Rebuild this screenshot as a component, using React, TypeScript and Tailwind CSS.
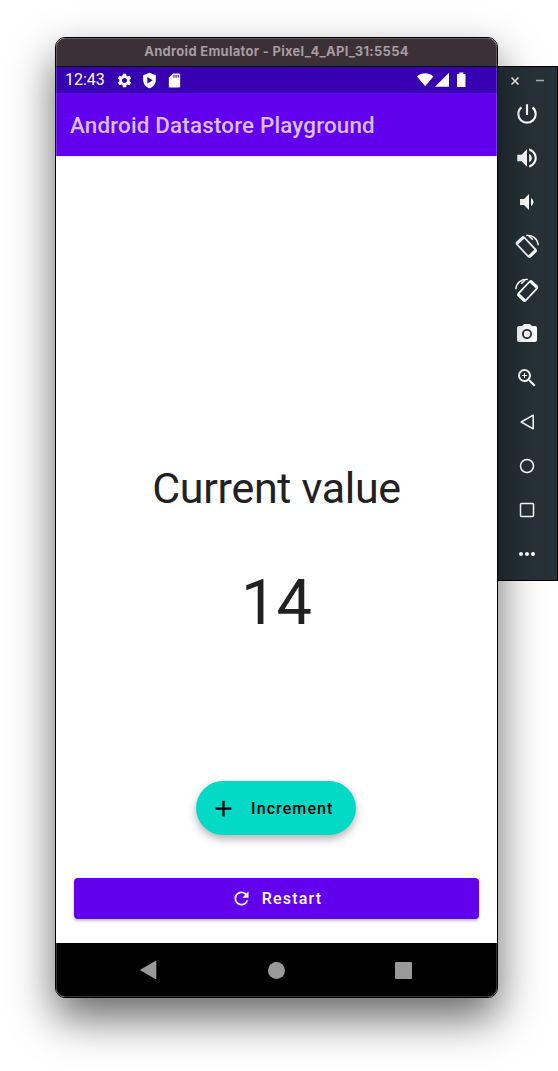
import type { ReactNode } from "react";

function Glyph({ d, className }: { d: string; className: string }) {
  return (
    <svg viewBox="0 0 24 24" className={className} fill="currentColor">
      <path d={d} />
    </svg>
  );
}

const paths = {
  settings:
    "M19.14 12.94c.04-.3.06-.61.06-.94 0-.32-.02-.64-.07-.94l2.03-1.58a.49.49 0 0 0 .12-.61l-1.92-3.32a.488.488 0 0 0-.59-.22l-2.39.96c-.5-.38-1.03-.7-1.62-.94l-.36-2.54a.484.484 0 0 0-.48-.41h-3.84c-.24 0-.43.17-.47.41l-.36 2.54c-.59.24-1.13.57-1.62.94l-2.39-.96c-.22-.08-.47 0-.59.22L2.74 8.87c-.12.21-.08.47.12.61l2.03 1.58c-.05.3-.09.63-.09.94s.02.64.07.94l-2.03 1.58a.49.49 0 0 0-.12.61l1.92 3.32c.12.22.37.29.59.22l2.39-.96c.5.38 1.03.7 1.62.94l.36 2.54c.05.24.24.41.48.41h3.84c.24 0 .44-.17.47-.41l.36-2.54c.59-.24 1.13-.56 1.62-.94l2.39.96c.22.08.47 0 .59-.22l1.92-3.32c.12-.22.07-.47-.12-.61l-2.01-1.58zM12 15.6c-1.98 0-3.6-1.62-3.6-3.6s1.62-3.6 3.6-3.6 3.6 1.62 3.6 3.6-1.62 3.6-3.6 3.6z",
  shieldPlay: "M12 1 3 4.500v6.500c0 5.55 3.84 10.74 9 12 5.16-1.26 9-6.45 9-12V4.500L12 1zM9 7.200l7.500 4.600L9 16.400V7.200z",
  sdCard: "M18 2h-8L4 8v12c0 1.1.9 2 2 2h12c1.1 0 2-.9 2-2V4c0-1.1-.9-2-2-2zm-6 6h-1.500V4H12v4zm3 0h-1.500V4H15v4zm3 0h-1.500V4H18v4z",
  power:
    "M13 3h-2v10h2V3zm4.83 2.17-1.42 1.42A6.92 6.92 0 0 1 19 12c0 3.87-3.13 7-7 7A6.995 6.995 0 0 1 7.58 6.58L6.17 5.17A8.932 8.932 0 0 0 3 12a9 9 0 0 0 18 0c0-2.74-1.23-5.18-3.17-6.83z",
  volumeUp:
    "M3 9v6h4l5 5V4L7 9H3zm13.5 3A4.5 4.5 0 0 0 14 7.97v8.05c1.48-.73 2.5-2.25 2.5-4.02zM14 3.23v2.06c2.89.86 5 3.54 5 6.71s-2.11 5.85-5 6.71v2.06c4.01-.91 7-4.49 7-8.77s-2.99-7.86-7-8.77z",
  volumeDown: "M18.5 12A4.5 4.5 0 0 0 16 7.97v8.05c1.48-.73 2.5-2.25 2.5-4.02zM5 9v6h4l5 5V4L9 9H5z",
  zoomIn:
    "M15.5 14h-.79l-.28-.27A6.471 6.471 0 0 0 16 9.5 6.5 6.5 0 1 0 9.5 16c1.61 0 3.09-.59 4.23-1.57l.27.28v.79l5 4.99L20.49 19l-4.99-5zm-6 0C7.01 14 5 11.99 5 9.5S7.01 5 9.5 5 14 7.01 14 9.5 11.99 14 9.5 14zm2.5-4h-2v2H9v-2H7V9h2V7h1v2h2v1z",
  more: "M6 10c-1.1 0-2 .9-2 2s.9 2 2 2 2-.9 2-2-.9-2-2-2zm12 0c-1.1 0-2 .9-2 2s.9 2 2 2 2-.9 2-2-.9-2-2-2zm-6 0c-1.1 0-2 .9-2 2s.9 2 2 2 2-.9 2-2-.9-2-2-2z",
  refresh:
    "M17.65 6.35A7.958 7.958 0 0 0 12 4c-4.42 0-7.99 3.58-7.99 8s3.57 8 7.99 8c3.73 0 6.84-2.55 7.73-6h-2.08A5.99 5.99 0 0 1 12 18c-3.31 0-6-2.69-6-6s2.69-6 6-6c1.66 0 3.14.69 4.22 1.78L13 11h7V4l-2.35 2.35z",
  add: "M19 13h-6v6h-2v-6H5v-2h6V5h2v6h6v2z",
};

function RotateIcon({ mirrored = false }: { mirrored?: boolean }) {
  return (
    <svg
      viewBox="0 0 24 24"
      className={mirrored ? "size-6 -scale-x-100 overflow-visible" : "size-6 overflow-visible"}
      fill="none"
      stroke="currentColor"
    >
      <g transform="rotate(-43 11.3 13)">
        <rect x="6.300" y="3.200" width="10" height="19.600" rx="1.500" strokeWidth="1.700" />
        <path d="M6.600 4.200h9.400M6.600 21.800h9.400" strokeWidth="2.600" />
      </g>
      <path d="M11.200 1.500c6.200-.8 11.400 3.200 12 9.800" strokeWidth="1.400" />
      <path d="M13.500 1.500l4.300 4.200" strokeWidth="1.600" />
    </svg>
  );
}

function SideButton({ children }: { children: ReactNode }) {
  return <button className="flex h-11 w-[58px] items-center justify-center">{children}</button>;
}

function SidePanel() {
  return (
    <aside className="mt-[29px] flex h-[515px] w-[60px] flex-col border-y border-r border-black bg-[#263238] text-white">
      <div className="flex h-[25px] items-center pt-[3px]">
        <svg viewBox="0 0 59 22" className="h-[22px] w-[59px]" fill="none" stroke="currentColor">
          <path d="m13.5 7.5 7 7m0-7-7 7" strokeWidth="1.5" />
          <path d="M38 10.500h8" strokeWidth="1.6" stroke="#a4aaad" />
        </svg>
      </div>
      <SideButton><Glyph d={paths.power} className="size-[26px]" /></SideButton>
      <SideButton><Glyph d={paths.volumeUp} className="size-[26px]" /></SideButton>
      <SideButton><Glyph d={paths.volumeDown} className="size-6" /></SideButton>
      <SideButton><RotateIcon /></SideButton>
      <SideButton><RotateIcon mirrored /></SideButton>
      <SideButton>
        <svg viewBox="0 0 24 24" className="size-6" fill="currentColor">
          <path
            fillRule="evenodd"
            d="M9 2 7.17 4H4c-1.1 0-2 .9-2 2v12c0 1.1.9 2 2 2h16c1.1 0 2-.9 2-2V6c0-1.1-.9-2-2-2h-3.17L15 2H9zm3 15c-2.76 0-5-2.24-5-5s2.24-5 5-5 5 2.24 5 5-2.24 5-5 5z"
          />
          <circle cx="12" cy="12" r="3.2" />
        </svg>
      </SideButton>
      <SideButton><Glyph d={paths.zoomIn} className="size-6" /></SideButton>
      <SideButton>
        <svg viewBox="0 0 24 24" className="size-6" fill="none" stroke="currentColor" strokeWidth="1.5" strokeLinejoin="round">
          <path d="M18.2 5.2v13.6L6.2 12z" />
        </svg>
      </SideButton>
      <SideButton>
        <svg viewBox="0 0 24 24" className="size-6" fill="none" stroke="currentColor" strokeWidth="1.5">
          <circle cx="12" cy="12" r="6.5" />
        </svg>
      </SideButton>
      <SideButton>
        <svg viewBox="0 0 24 24" className="size-6" fill="none" stroke="currentColor" strokeWidth="1.5">
          <rect x="5.5" y="5.5" width="13" height="13" rx="1" />
        </svg>
      </SideButton>
      <SideButton><Glyph d={paths.more} className="size-6" /></SideButton>
    </aside>
  );
}

function StatusBar() {
  return (
    <div className="flex h-[26px] items-center bg-[#3700b3] pl-[9px] text-white">
      <span className="w-[51px] text-[16px] leading-[26px]">12:43</span>
      <div className="flex items-center gap-[8px]">
        <Glyph d={paths.settings} className="size-[17px]" />
        <Glyph d={paths.shieldPlay} className="size-[17px]" />
        <Glyph d={paths.sdCard} className="size-[17px]" />
      </div>
      <svg viewBox="0 0 50 16" className="mr-[30px] ml-auto h-4 w-[50px]" fill="currentColor">
        <path d="M0 4.4C4.8.1 11.600.1 16.400 4.400L8.200 14.300z" />
        <path d="M32 .8v13.900H18z" />
        <path d="M42.300.4h4v1.500h2.200V15H40V1.900h2.300z" />
      </svg>
    </div>
  );
}

export default function App() {
  return (
    <div className="flex h-[1071px] w-[558px] items-start overflow-hidden bg-white pt-[37px] pl-[55px] font-['Roboto',sans-serif]">
      <div className="relative flex h-[961px] w-[443px] shrink-0 flex-col overflow-hidden rounded-[10px] border border-black bg-white shadow-[0_20px_44px_rgba(0,0,0,0.6)]">
        <header className="flex h-[29px] items-center justify-center border-b border-black bg-[#3b3036] pb-px font-['Inter',sans-serif] text-[13px] font-bold tracking-[0.29px] text-[#a59da1]">
          Android Emulator - Pixel_4_API_31:5554
        </header>
        <StatusBar />
        <div className="relative z-10 flex h-[63px] shrink-0 items-center bg-[#6200ee] pt-[2px] pl-[14px] text-[22.4px] font-medium tracking-[0.17px] text-[#d8bffb] shadow-[0_1px_3px_rgba(0,0,0,0.12)]">
          Android Datastore Playground
        </div>
        <main className="flex h-[787px] shrink-0 flex-col items-center text-[#212121]">
          <h1 className="mt-[306px] text-[43px] leading-[52px] tracking-[-0.3px]">Current value</h1>
          <p className="mt-[52px] text-[63px] leading-[74px]">14</p>
          <button className="mt-[141px] mr-px flex h-[54px] w-[160px] items-center rounded-full bg-[#03dac5] pl-[14px] text-black shadow-[0_4px_8px_rgba(0,0,0,0.3)]">
            <Glyph d={paths.add} className="size-[27px]" />
            <span className="pt-[2px] pl-[14px] text-[16px] font-medium tracking-[1.1px]">Increment</span>
          </button>
          <button className="mt-[43px] flex h-[41px] w-[405px] items-center justify-center gap-[10px] rounded-[4px] bg-[#6200ee] text-[16px] font-medium tracking-[1.2px] text-white shadow-[0_2px_3px_rgba(0,0,0,0.25)]">
            <Glyph d={paths.refresh} className="size-[21px]" />
            <span className="pt-px">Restart</span>
          </button>
        </main>
        <nav className="flex h-[54px] shrink-0 items-center justify-between bg-black pr-[85px] pl-[84px] text-[#999999]">
          <svg viewBox="0 0 17 18" className="h-[18px] w-[17px]" fill="currentColor">
            <path d="M15.300 0q1-.4 1 .6v16.800q0 1-1 .6L.6 9.600q-.8-.6 0-1.200z" />
          </svg>
          <span className="size-[17px] rounded-full bg-[#999999]" />
          <span className="size-[17px] rounded-[1px] bg-[#999999]" />
        </nav>
        <div className="pointer-events-none absolute inset-0 z-20 rounded-[9px] border border-white/20" />
      </div>
      <SidePanel />
    </div>
  );
}
